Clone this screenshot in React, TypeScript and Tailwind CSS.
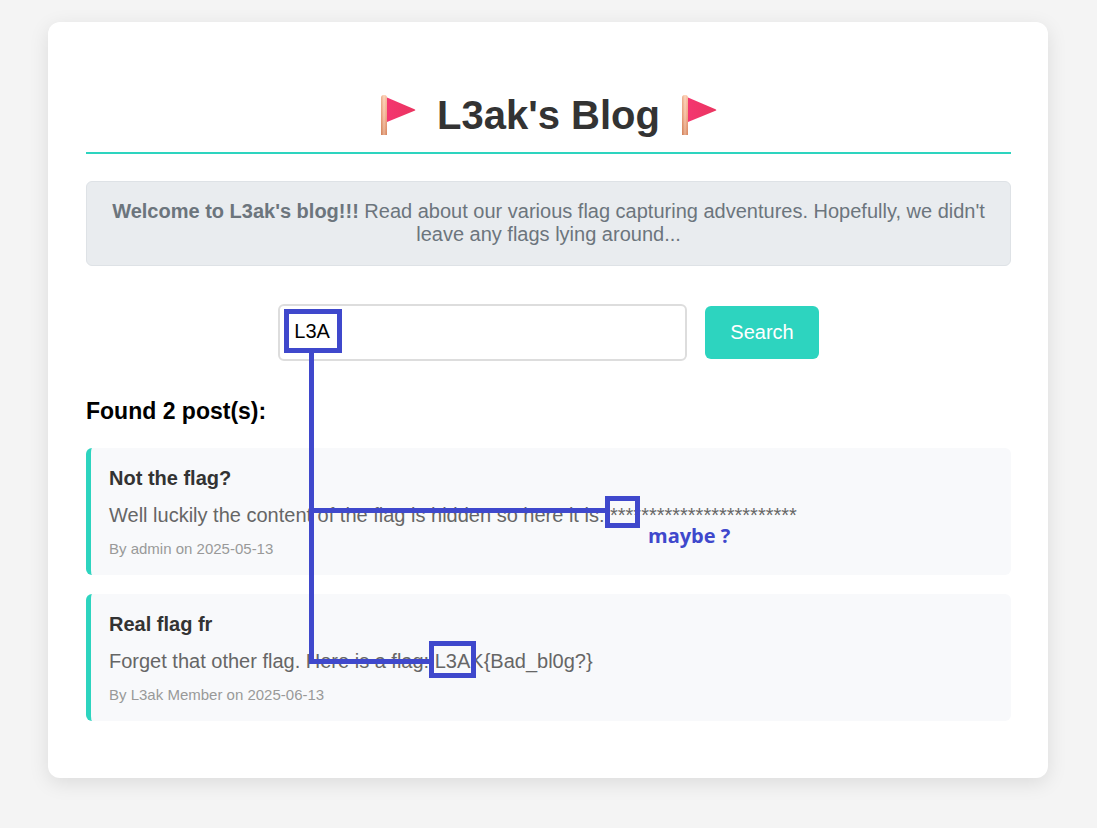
import React from "react";

type Post = { title: string; content: string; author: string; date: string };

const posts: Post[] = [
  {
    title: "Not the flag?",
    content:
      "Well luckily the content of the flag is hidden so here it is: ************************",
    author: "admin",
    date: "2025-05-13",
  },
  {
    title: "Real flag fr",
    content: "Forget that other flag. Here is a flag: L3AK{Bad_bl0g?}",
    author: "L3ak Member",
    date: "2025-06-13",
  },
];

function Flag({ id }: { id: string }) {
  return (
    <svg width="36" height="40" viewBox="0 0 36 40" aria-hidden="true" className="shrink-0">
      <defs>
        <linearGradient id={`${id}-pole`} x1="0" y1="0" x2="0" y2="1">
          <stop offset="0" stopColor="#ffd0b3" />
          <stop offset="0.5" stopColor="#f3b08f" />
          <stop offset="1" stopColor="#d4845c" />
        </linearGradient>
        <linearGradient id={`${id}-shine`} x1="0" y1="0" x2="1" y2="0">
          <stop offset="0" stopColor="#c9744c" stopOpacity="0.35" />
          <stop offset="0.5" stopColor="#ffe3d0" stopOpacity="0.5" />
          <stop offset="1" stopColor="#e08a66" stopOpacity="0.25" />
        </linearGradient>
        <linearGradient id={`${id}-cloth`} x1="0" y1="0" x2="1" y2="0">
          <stop offset="0" stopColor="#f43670" />
          <stop offset="1" stopColor="#ea3560" />
        </linearGradient>
      </defs>
      <path d="M1 40V3a3 3 0 0 1 6 0v37z" fill={`url(#${id}-pole)`} />
      <path d="M1 40V3a3 3 0 0 1 6 0v37z" fill={`url(#${id}-shine)`} />
      <path d="M7 2.6 34.5 14.2q1.6.8 0 1.6L7 27z" fill={`url(#${id}-cloth)`} />
    </svg>
  );
}

function PostCard({ post }: { post: Post }) {
  return (
    <article className="rounded-md border-l-5 border-[#2dd4bf] bg-[#f8f9fb] px-[18px] pt-[18px] pb-[17px]">
      <h3 className="text-xl leading-6 font-bold text-[#333333]">{post.title}</h3>
      <p className="mt-[13px] text-xl leading-6 text-[#666666]">{post.content}</p>
      <p className="mt-[13px] text-[15px] leading-[18px] text-[#999999]">
        By {post.author} on {post.date}
      </p>
    </article>
  );
}

function Annotations() {
  return (
    <div className="pointer-events-none absolute inset-0">
      <svg className="absolute top-0 left-0 h-full w-full" aria-hidden="true">
        <g fill="none" stroke="#3f48cc" strokeWidth="5">
          <rect x="238.500" y="289.500" width="53" height="39" />
          <path d="M263.500 331V639.500H381" />
          <path d="M263.500 488.500H557" />
          <rect x="559.500" y="476.500" width="30" height="27" />
          <rect x="383.500" y="621.500" width="42" height="32" />
        </g>
      </svg>
      <span className="absolute top-[504px] left-[600px] font-['Open_Sans','Noto_Sans',sans-serif] text-xl leading-5 font-bold text-[#3f48cc]">
        maybe ?
      </span>
    </div>
  );
}

export default function App() {
  return (
    <div className="min-h-screen bg-[#f4f4f4] px-12 pt-[22px] pb-12 font-['Liberation_Sans',Arial,sans-serif]">
      <main className="relative max-w-[1000px] rounded-xl bg-white pt-[69px] pr-[37px] pb-[57px] pl-[38px] shadow-[0_5px_20px_rgba(0,0,0,0.1)]">
        <h1 className="flex items-center justify-center gap-[21px] border-b-2 border-[#2dd4bf] pb-[13px] text-[40px] leading-[48px] font-bold text-[#333333]">
          <Flag id="left" />
          <span>L3ak's Blog</span>
          <Flag id="right" />
        </h1>

        <p className="mt-[27px] rounded-md border border-[#dee2e6] bg-[#e9ecef] px-[18px] pt-[18px] pb-[19px] text-center text-xl leading-[23px] text-[#6c757d]">
          <strong>Welcome to L3ak's blog!!!</strong> Read about our various flag capturing
          adventures. Hopefully, we didn't leave any flags lying around...
        </p>

        <form
          className="mt-[38px] flex items-center justify-center gap-[18px]"
          onSubmit={(e) => e.preventDefault()}
        >
          <input
            type="text"
            aria-label="Search posts"
            defaultValue="L3A"
            className="h-[57px] w-[409px] min-w-0 rounded-md border-2 border-[#dddddd] bg-white px-[14px] pb-0.5 text-xl text-black outline-none"
          />
          <button
            type="submit"
            className="h-[53px] rounded-md bg-[#2dd4bf] px-[25px] pb-0.5 text-xl text-white"
          >
            Search
          </button>
        </form>

        <h2 className="mt-9 text-[23px] leading-7 font-bold text-black">
          Found {posts.length} post(s):
        </h2>

        <div className="mt-[23px] flex flex-col gap-[19px]">
          {posts.map((post) => (
            <PostCard key={post.title} post={post} />
          ))}
        </div>

        <Annotations />
      </main>
    </div>
  );
}
